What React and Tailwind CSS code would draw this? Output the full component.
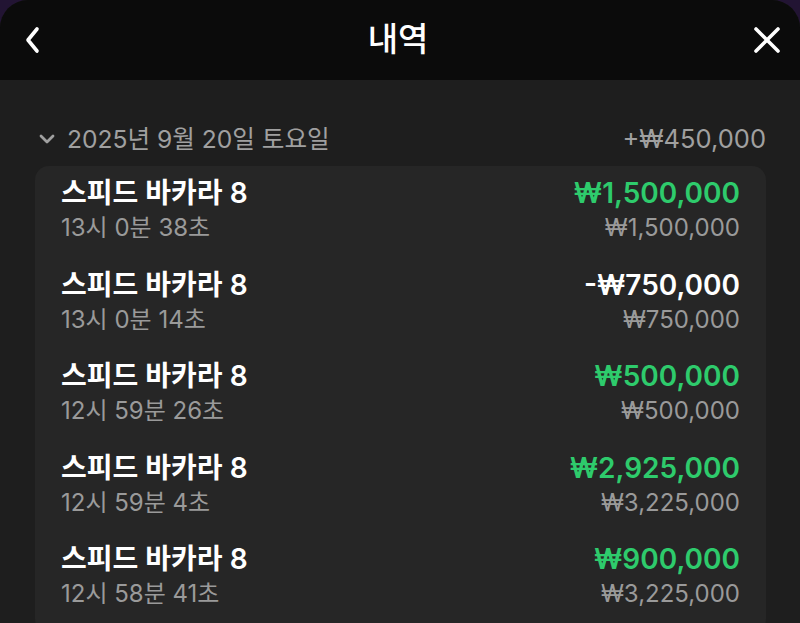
import { ChevronDown } from "lucide-react";

const rows = [
  { time: "13시 0분 38초", amount: "₩1,500,000", bet: "₩1,500,000", win: true },
  { time: "13시 0분 14초", amount: "-₩750,000", bet: "₩750,000", win: false },
  { time: "12시 59분 26초", amount: "₩500,000", bet: "₩500,000", win: true },
  { time: "12시 59분 4초", amount: "₩2,925,000", bet: "₩3,225,000", win: true },
  { time: "12시 58분 41초", amount: "₩900,000", bet: "₩3,225,000", win: true },
];

export default function App() {
  return (
    <div
      className="h-[623px] w-[800px] overflow-hidden bg-[#221433]"
      style={{ fontFamily: 'Inter, "Noto Sans CJK KR", sans-serif' }}
    >
      <div className="flex h-full flex-col overflow-hidden rounded-t-[28px] bg-[#1e1e1e]">
        {/* Header */}
        <div className="flex h-[80px] shrink-0 items-center justify-between bg-[#0b0b0b] pl-[20px] pr-[18px]">
          <button className="flex h-[30px] w-[24px] items-center justify-center">
            <svg width="18" height="28" viewBox="0 0 18 28" fill="none">
              <path d="M14 3 L5 14 L14 25" stroke="white" strokeWidth="3.6" strokeLinecap="round" strokeLinejoin="round" />
            </svg>
          </button>
          <h1 className="text-[33px] font-medium text-white">내역</h1>
          <button className="flex h-[30px] w-[30px] items-center justify-center">
            <svg width="28" height="28" viewBox="0 0 28 28" fill="none">
              <path d="M3 3 L25 25 M25 3 L3 25" stroke="white" strokeWidth="3.6" strokeLinecap="round" />
            </svg>
          </button>
        </div>

        {/* Content */}
        <div className="pl-[35px] pr-[34px] pt-[40px]">
          <div className="flex h-[38px] items-center justify-between text-[24.6px] text-[#a0a0a0]">
            <div className="flex items-center gap-[8px]">
              <ChevronDown size={24} strokeWidth={2.8} className="text-[#a0a0a0]" />
              <span>2025년 9월 20일 토요일</span>
            </div>
            <span className="text-[25.5px]">+₩450,000</span>
          </div>

          <div className="mt-[8px] rounded-[14px] bg-[#262626] px-[26px] pt-[9px]">
            {rows.map((r, i) => (
              <div key={i} className="flex justify-between pb-[21.6px]">
                <div>
                  <div className="text-[28px] font-semibold leading-[36px] text-white">스피드 바카라 8</div>
                  <div className="text-[24px] leading-[34px] text-[#9a9a9a]">{r.time}</div>
                </div>
                <div className="text-right">
                  <div
                    className={`text-[28px] font-semibold leading-[36px] ${r.win ? "text-[#2ecb6c]" : "text-white"}`}
                  >
                    {r.amount}
                  </div>
                  <div className="text-[24px] leading-[34px] text-[#9a9a9a]">{r.bet}</div>
                </div>
              </div>
            ))}
          </div>
        </div>
      </div>
    </div>
  );
}
